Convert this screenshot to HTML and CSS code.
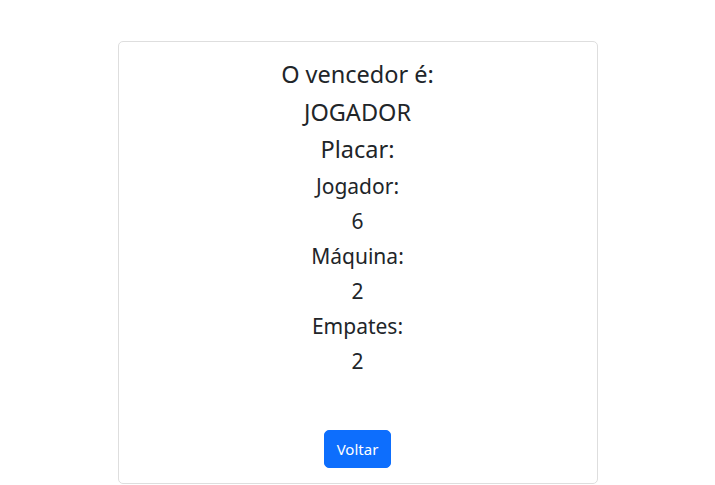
FILE: index.html
```html
<!DOCTYPE html>
<html lang="pt">
<head>
<meta charset="utf-8">
<title>Resultado</title>
<link rel="stylesheet" href="styles.css">
</head>
<body>
<main class="page">
  <section class="card">
    <h4 class="title">O vencedor é:</h4>
    <h4 class="title">JOGADOR</h4>
    <h4 class="title">Placar:</h4>
    <h5 class="line">Jogador:</h5>
    <h5 class="line">6</h5>
    <h5 class="line">Máquina:</h5>
    <h5 class="line">2</h5>
    <h5 class="line">Empates:</h5>
    <h5 class="line">2</h5>
    <div class="actions">
      <button class="btn" type="button">Voltar</button>
    </div>
  </section>
</main>
</body>
</html>
```

FILE: styles.css
```css
* { box-sizing: border-box; }
html, body { margin: 0; padding: 0; background: #fff; }
body {
  font-family: "Noto Sans", "Open Sans", "Liberation Sans", sans-serif;
  color: #212529;
}
.page {
  display: flex;
  justify-content: center;
  padding-top: 41px;
}
.card {
  width: 480px;
  height: 443px;
  border: 1px solid #dedede;
  border-radius: 5px;
  padding: 18px 16px 15px;
  display: flex;
  flex-direction: column;
  align-items: center;
}
.title {
  margin: 0 0 8px;
  font-size: 23.5px;
  font-weight: 445;
  line-height: 29.5px;
}
.line {
  margin: 0 0 8px;
  font-size: 21px;
  font-weight: 445;
  line-height: 27px;
}
.actions {
  margin-top: auto;
}
.btn {
  font-family: inherit;
  font-size: 15px;
  font-weight: 450;
  line-height: 24px;
  padding: 6px 12px;
  height: 38px;
  border: 1px solid #0d6efd;
  background: #0d6efd;
  color: #fff;
  border-radius: 5px;
}
```
